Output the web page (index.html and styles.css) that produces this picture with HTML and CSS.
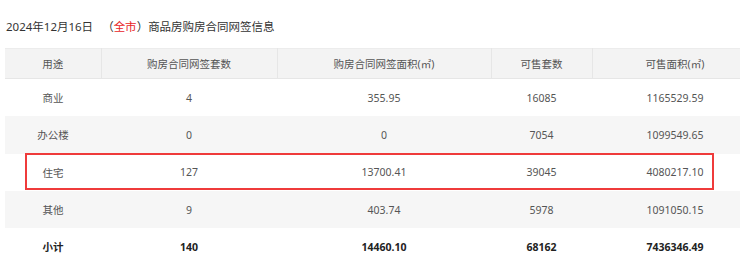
FILE: index.html
```html
<!DOCTYPE html>
<html lang="zh">
<head>
<meta charset="utf-8">
<link rel="stylesheet" href="styles.css">
</head>
<body>
<div class="page">
  <div class="title">2024年12月16日<span class="paren">（<span class="city">全市</span>）</span>商品房购房合同网签信息</div>
  <div class="table-wrap">
    <table class="data">
      <colgroup>
        <col class="c0"><col class="c1"><col class="c2"><col class="c3"><col class="c4">
      </colgroup>
      <thead>
        <tr><th>用途</th><th>购房合同网签套数</th><th>购房合同网签面积(㎡)</th><th>可售套数</th><th>可售面积(㎡)</th></tr>
      </thead>
      <tbody>
        <tr><td>商业</td><td>4</td><td>355.95</td><td>16085</td><td>1165529.59</td></tr>
        <tr class="alt"><td>办公楼</td><td>0</td><td>0</td><td>7054</td><td>1099549.65</td></tr>
        <tr><td>住宅</td><td>127</td><td>13700.41</td><td>39045</td><td>4080217.10</td></tr>
        <tr class="alt"><td>其他</td><td>9</td><td>403.74</td><td>5978</td><td>1091050.15</td></tr>
        <tr class="total"><td>小计</td><td>140</td><td>14460.10</td><td>68162</td><td>7436346.49</td></tr>
      </tbody>
    </table>
    <div class="highlight"></div>
  </div>
</div>
</body>
</html>
```
FILE: styles.css
```css
html, body {
  margin: 0;
  padding: 0;
  overflow: hidden;
  background: #fff;
}
.page {
  width: 753px;
  padding-left: 5px;
  font-family: "Noto Sans", "Noto Sans CJK SC", sans-serif;
  font-size: 10.5px;
  color: #555;
}
.title {
  margin-top: 17px;
  height: 20px;
  line-height: 20px;
  font-size: 11.5px;
  color: #333;
  padding-left: 1px;
}
.paren {
  margin-left: 9px;
}
.city {
  color: #e8231f;
}
.table-wrap {
  position: relative;
  margin-top: 11px;
}
.data {
  width: 753px;
  border-collapse: collapse;
  table-layout: fixed;
}
.c0 { width: 96px; }
.c1 { width: 176px; }
.c2 { width: 214px; }
.c3 { width: 101px; }
.c4 { width: 166px; }
.data th {
  height: 29px;
  padding: 0;
  background: #f3f3f3;
  border: 1px solid #e6e6e6;
  border-top-color: #ececec;
  font-weight: normal;
  color: #555;
  text-align: center;
}
.data th:first-child { border-left: none; }
.data td {
  height: 37.3px;
  padding: 0;
  text-align: center;
  color: #555;
}
.data tr.alt td {
  background: #f6f6f6;
}
.data tr.total td {
  font-weight: bold;
  color: #222;
}
.highlight {
  position: absolute;
  left: 20px;
  top: 105px;
  width: 685px;
  height: 33px;
  border: 2px solid #ef3b3b;
}
```
